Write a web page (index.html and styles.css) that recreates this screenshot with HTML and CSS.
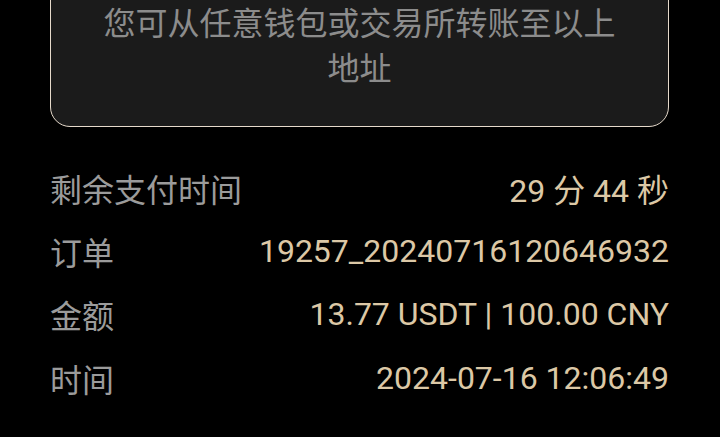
FILE: index.html
```html
<!DOCTYPE html>
<html lang="zh-CN">
<head>
<meta charset="utf-8">
<link rel="stylesheet" href="styles.css">
</head>
<body>
<div class="page">
  <div class="card">
    <p class="card-text">您可从任意钱包或交易所转账至以上地址</p>
  </div>
  <div class="rows">
    <div class="row"><span class="label">剩余支付时间</span><span class="value">29 分 44 秒</span></div>
    <div class="row"><span class="label">订单</span><span class="value">19257_20240716120646932</span></div>
    <div class="row"><span class="label">金额</span><span class="value">13.77 USDT | 100.00 CNY</span></div>
    <div class="row"><span class="label">时间</span><span class="value">2024-07-16 12:06:49</span></div>
  </div>
</div>
</body>
</html>
```
FILE: styles.css
```css
html, body {
  margin: 0;
  padding: 0;
  background: #000;
  overflow: hidden;
}
.page {
  width: 720px;
  height: 437px;
  padding: 0 51px 0 50px;
  box-sizing: border-box;
  font-family: Roboto, "Noto Sans CJK SC", sans-serif;
  font-size: 32px;
}
.card {
  margin-top: -32px;
  padding: 30px 40px 37px;
  background: #1b1b1b;
  border: 1px solid #e6dacb;
  border-radius: 0 0 20px 20px;
}
.card-text {
  margin: 0;
  text-align: center;
  color: #8c8c8c;
  line-height: 45px;
  font-family: "Noto Sans CJK SC", sans-serif;
}
.rows {
  margin-top: 29px;
  display: flex;
  flex-direction: column;
}
.row {
  height: 63.4px;
  display: flex;
  align-items: center;
  justify-content: space-between;
}
.label {
  color: #9b9b9b;
  font-family: "Noto Sans CJK SC", sans-serif;
}
.value {
  color: #dcc8a6;
  font-family: Roboto, "Noto Sans CJK SC", sans-serif;
}
```
